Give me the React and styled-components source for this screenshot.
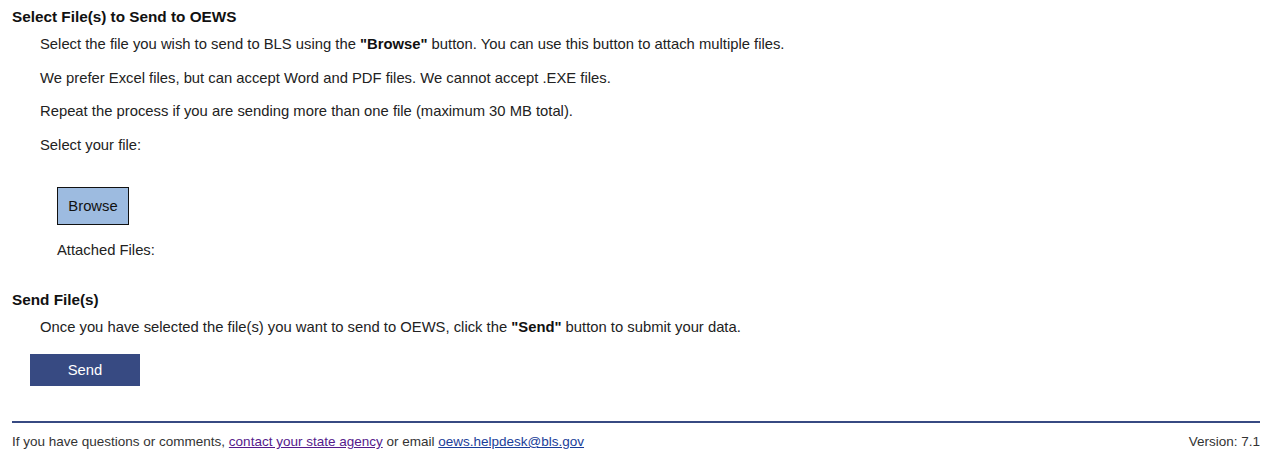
import React from "react";
import styled, { createGlobalStyle } from "styled-components";

const GlobalStyle = createGlobalStyle`
  body {
    margin: 0;
    background: #fff;
    font-family: "Liberation Sans", Arial, sans-serif;
    color: #222;
  }
`;

function App() {
  return (
    <>
      <GlobalStyle />
      <Page>
        <Section>
          <Heading>Select File(s) to Send to OEWS</Heading>
          <Body>
            <Para>
              Select the file you wish to send to BLS using the <b>"Browse"</b> button. You can use
              this button to attach multiple files.
            </Para>
            <Para>We prefer Excel files, but can accept Word and PDF files. We cannot accept .EXE files.</Para>
            <Para>Repeat the process if you are sending more than one file (maximum 30 MB total).</Para>
            <Para>Select your file:</Para>
          </Body>
          <UploadArea>
            <BrowseButton type="button">Browse</BrowseButton>
            <Attached>Attached Files:</Attached>
          </UploadArea>
        </Section>

        <Section>
          <Heading>Send File(s)</Heading>
          <Body>
            <Para>
              Once you have selected the file(s) you want to send to OEWS, click the <b>"Send"</b>{" "}
              button to submit your data.
            </Para>
          </Body>
          <SendButton type="button">Send</SendButton>
        </Section>

        <Footer>
          <FooterText>
            If you have questions or comments, <VisitedLink href="#">contact your state agency</VisitedLink>{" "}
            or email <MailLink href="#">oews.helpdesk@bls.gov</MailLink>
          </FooterText>
          <FooterText>Version: 7.1</FooterText>
        </Footer>
      </Page>
    </>
  );
}

const Page = styled.div`
  padding: 8px 16px 0 12px;
`;

const Section = styled.section`
  display: flex;
  flex-direction: column;
`;

const Heading = styled.h2`
  margin: 0;
  font-size: 15.3px;
  font-weight: bold;
  line-height: 18px;
  color: #111;
`;

const Body = styled.div`
  padding-left: 28px;
  margin-top: 10px;
  display: flex;
  flex-direction: column;
  gap: 16.7px;
`;

const Para = styled.p`
  margin: 0;
  font-size: 14.8px;
  line-height: 17px;

  b {
    color: #111;
  }
`;

const UploadArea = styled.div`
  padding-left: 45px;
  margin-top: 33px;
  display: flex;
  flex-direction: column;
  align-items: flex-start;
  gap: 17px;
`;

const BrowseButton = styled.button`
  width: 72px;
  height: 38px;
  background: #9dbbe0;
  border: 1px solid #111;
  font-family: inherit;
  font-size: 14.8px;
  color: #111;
  padding: 0;
`;

const Attached = styled.div`
  font-size: 14.8px;
  line-height: 17px;
  margin-bottom: 32px;
`;

const SendButton = styled.button`
  margin: 18px 0 0 18px;
  width: 110px;
  height: 32px;
  background: #374a82;
  border: none;
  color: #fff;
  font-family: inherit;
  font-size: 14.8px;
  padding: 0;
`;

const Footer = styled.footer`
  margin-top: 35px;
  border-top: 2px solid #374a82;
  padding-top: 11px;
  display: flex;
  justify-content: space-between;
`;

const FooterText = styled.span`
  font-size: 13.5px;
  line-height: 16px;
  color: #333;
`;

const VisitedLink = styled.a`
  color: #551a8b;
  text-decoration: underline;
`;

const MailLink = styled.a`
  color: #1a3d99;
  text-decoration: underline;
`;

export default App;
